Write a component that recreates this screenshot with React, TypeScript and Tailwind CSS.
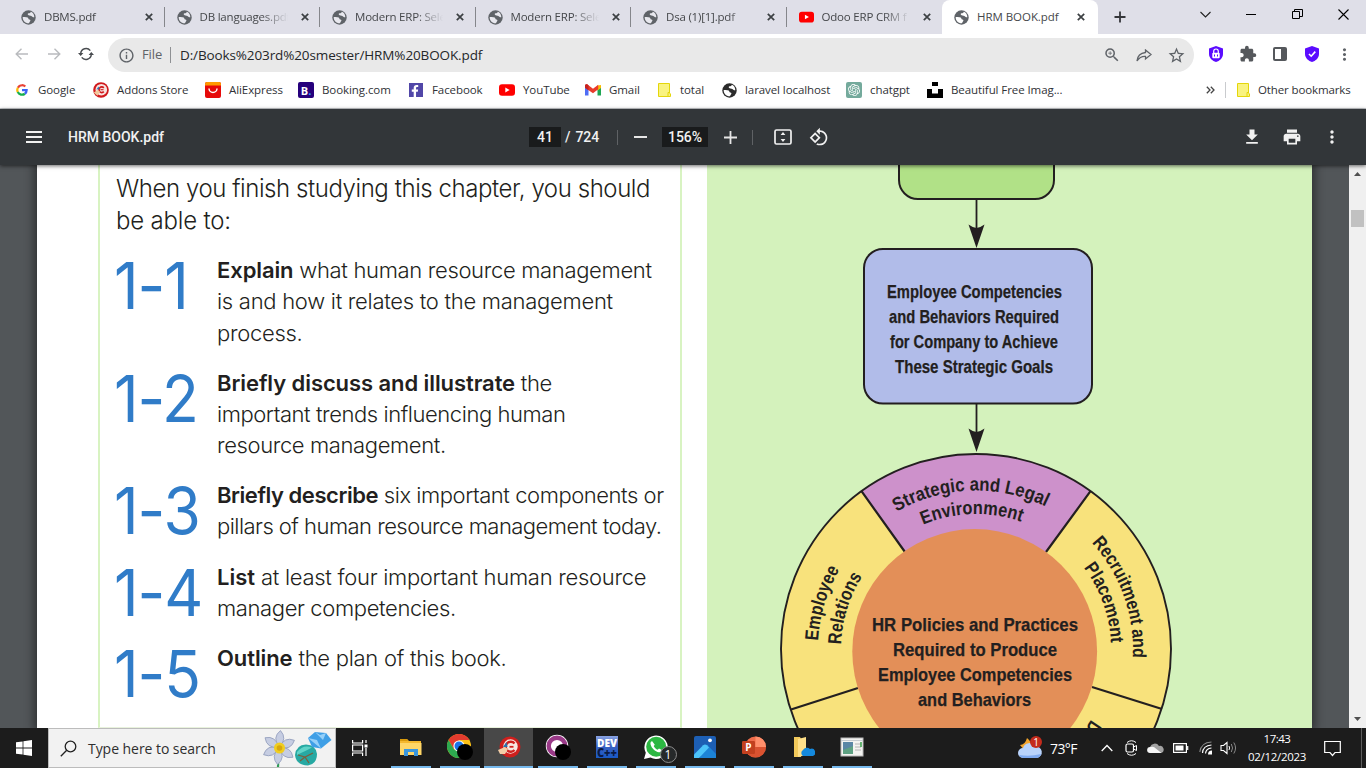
import type { ReactNode } from "react";
import {
  MdOutlineInfo, MdMoreVert, MdExtension, MdFileDownload, MdPrint, MdStarOutline, MdOutlineZoomIn,
} from "react-icons/md";
import { SiOpenai } from "react-icons/si";
import { FaFacebookF } from "react-icons/fa";

const INK = "#231f20";

function Globe({ color = "#5f6368", land = "#e8e8ee" }: { color?: string; land?: string }) {
  return (
    <svg width="15" height="15" viewBox="0 0 15 15" className="shrink-0">
      <circle cx="7.5" cy="7.5" r="7.2" fill={color} />
      <path d="M9.800 1.800C9.600 3 8.600 3.200 7.600 3.300C6.300 3.500 6.600 4.800 7.600 5.200C8.700 5.600 10.500 5.400 11 6.600C11.300 7.400 12.500 7.300 13.300 7.300C13.400 4.800 12 2.600 9.800 1.800Z" fill={land} />
      <path d="M1.700 7C3.500 7 5.800 6.900 6.900 7.800C7.600 8.500 7.200 9.300 8.300 9.600C9.600 9.900 9.700 10.800 8.900 11.600C8.400 12.200 8.300 12.800 7.900 13.300C4.400 13.500 1.500 10.600 1.700 7Z" fill={land} />
    </svg>
  );
}

function YouTube({ w = 16 }: { w?: number }) {
  return (
    <svg width={w} height="12" viewBox="0 0 16 12" className="shrink-0">
      <rect width="16" height="11.5" y=".3" rx="3" fill="#f00" />
      <path d="M6.3 3.6v4.8L10.6 6z" fill="#fff" />
    </svg>
  );
}

function Folder() {
  return (
    <svg width="14" height="16" viewBox="0 0 14 16">
      <path d="M1.5 1.5h11v9.5l1 1v2.5h-12z" fill="#f9f380" stroke="#e4d60a" />
      <path d="M11 14.5v-4h1.5" fill="none" stroke="#e4d60a" />
    </svg>
  );
}

function Close() {
  return (
    <svg width="8" height="8" viewBox="0 0 8 8" className="shrink-0">
      <path d="M.8.8l6.4 6.4M7.2.8L.8 7.2" stroke="#3c4043" strokeWidth="1.7" />
    </svg>
  );
}

function Addons() {
  return (
    <svg width="16" height="16" viewBox="0 0 16 16">
      <circle cx="8" cy="8" r="7.8" fill="#d0191c" />
      <circle cx="8.3" cy="7.7" r="5.8" fill="#f7e3df" />
      <path d="M10.800 5.800A2.800 2.800 0 1 0 10.800 9.700" fill="none" stroke="#d0191c" strokeWidth="1.700" />
      <path d="M7.5 7.7h3" stroke="#d0191c" strokeWidth="1.1" />
      <path d="M.8 10.5l4-2.5 2.2 1.5-2.6 4.2z" fill="#f2c79b" />
      <path d="M3.5 7.5l2-3 1 2.5z" fill="#2876b8" />
    </svg>
  );
}

const TABS: { title: string; icon: "globe" | "yt" }[] = [
  { title: "DBMS.pdf", icon: "globe" },
  { title: "DB languages.pdf", icon: "globe" },
  { title: "Modern ERP: Sele", icon: "globe" },
  { title: "Modern ERP: Sele", icon: "globe" },
  { title: "Dsa (1)[1].pdf", icon: "globe" },
  { title: "Odoo ERP CRM f", icon: "yt" },
];

function TabStrip() {
  return (
    <div className="flex h-[34px] bg-[#dfdfe8] pl-[9px] text-[11.500px] tracking-[-0.200px] text-[#45474a]">
      {TABS.map((t, i) => (
        <div key={i} className="flex h-[34px] w-[155.500px] shrink-0 items-center pl-3">
          {t.icon === "globe" ? <Globe /> : <YouTube w={15} />}
          <span className="ml-2 w-[90px] overflow-hidden whitespace-nowrap [mask-image:linear-gradient(to_right,black_68%,transparent_98%)]">{t.title}</span>
          <span className="ml-[11px]"><Close /></span>
          {i < 5 && <span className="ml-auto h-5 w-px bg-[#85868b]" />}
        </div>
      ))}
      <div className="flex w-[156px] shrink-0 items-center rounded-t-lg bg-white pl-[12px]">
        <Globe land="#fff" />
        <span className="ml-2 w-[84px] whitespace-nowrap tracking-[-0.050px]">HRM BOOK.pdf</span>
        <span className="ml-4"><Close /></span>
      </div>
      <svg width="12" height="12" viewBox="0 0 12 12" className="ml-[16px] mt-[11px] shrink-0"><path d="M6 .5v11M.5 6h11" stroke="#35363a" strokeWidth="1.8" /></svg>
      <div className="ml-auto flex h-7 items-center">
        <span className="flex w-[46px] justify-center"><svg width="11" height="7" viewBox="0 0 11 7"><path d="M.5 1l5 5 5-5" fill="none" stroke="#222" strokeWidth="1.1" /></svg></span>
        <span className="flex w-[46px] justify-center"><span className="h-px w-[10px] bg-black" /></span>
        <span className="flex w-[46px] justify-center"><svg width="11" height="11" viewBox="0 0 11 11"><path d="M.5 2.5h7v7h-7zM2.5 2.5v-2h8v7h-3" fill="none" stroke="#000" /></svg></span>
        <span className="flex w-[46px] justify-center"><svg width="11" height="11" viewBox="0 0 11 11"><path d="M.5.5l10 10M10.5.5l-10 10" stroke="#000" strokeWidth="1.1" /></svg></span>
      </div>
    </div>
  );
}

function Slot({ children }: { children: ReactNode }) {
  return <span className="flex h-8 w-8 shrink-0 items-center justify-center">{children}</span>;
}

function Shield({ lock }: { lock?: boolean }) {
  return (
    <svg width="16" height="16" viewBox="0 0 16 16">
      <path d="M8 0L15 2.5V8C15 12 11.5 15 8 16C4.500 15 1 12 1 8V2.500Z" fill="#5b0cff" />
      {lock ? (
        <>
          <path d="M5.700 7V5.300a2.300 2.300 0 0 1 4.600 0V7" fill="none" stroke="#fff" strokeWidth="1.200" />
          <rect x="4.300" y="6.800" width="7.400" height="5.400" rx="1" fill="#fff" />
          <path d="M6.500 8.500v2M9.500 8.500v2" stroke="#5b0cff" />
        </>
      ) : (
        <path d="M5 8l2.200 2.200L11.300 5.600" fill="none" stroke="#fff" strokeWidth="1.600" />
      )}
    </svg>
  );
}

function AddressBar() {
  return (
    <div className="flex h-[38px] items-center bg-white pl-[6px] pt-[2px] text-[#5f6368]">
      <Slot><svg width="14" height="12" viewBox="0 0 14 12"><path d="M6.500.7L1.200 6l5.300 5.300M1.200 6H13" fill="none" stroke="#b9bbbe" strokeWidth="1.400" /></svg></Slot>
      <Slot><svg width="14" height="12" viewBox="0 0 14 12"><path d="M7.500.7L12.800 6l-5.300 5.300M12.800 6H1" fill="none" stroke="#b9bbbe" strokeWidth="1.400" /></svg></Slot>
      <Slot>
        <svg width="16" height="14" viewBox="0 0 16 14">
          <path d="M2.700 6.500A5.400 5.400 0 0 1 12.300 3.600M13.300 7.500A5.400 5.400 0 0 1 3.700 10.400" fill="none" stroke="#4a4d51" strokeWidth="1.500" />
          <path d="M0 6h5.400L2.700 9zM10.600 8H16L13.300 5z" fill="#4a4d51" />
        </svg>
      </Slot>
      <div className="ml-[6px] mt-[2px] flex h-[34px] w-[1086px] items-center rounded-full bg-[#e9e9e9] pl-[10px] pr-[2px]">
        <MdOutlineInfo size={17} className="shrink-0 rotate-0" />
        <span className="ml-[7px] w-[22px] text-[13px] tracking-[-0.1px]">File</span>
        <span className="ml-[6px] h-4 w-px bg-[#8f9194]" />
        <span className="ml-[9px] whitespace-nowrap text-[13.5px] tracking-[-0.12px] text-[#25272a]">D:/Books%203rd%20smester/HRM%20BOOK.pdf</span>
        <span className="ml-auto flex">
          <Slot><MdOutlineZoomIn size={18} /></Slot>
          <Slot><svg width="16" height="13" viewBox="0 0 16 13"><path d="M9.500 1l5.500 4.500L9.500 10V7.500C5.500 7.200 3 9 1 12C1.500 7 4.500 4 9.500 3.500Z" fill="none" stroke="#5f6368" strokeWidth="1.300" /></svg></Slot>
          <Slot><MdStarOutline size={19} /></Slot>
        </span>
      </div>
      <div className="ml-[6px] flex">
        <Slot><Shield lock /></Slot>
        <Slot><MdExtension size={18} color="#55585c" /></Slot>
        <Slot><svg width="14" height="14" viewBox="0 0 14 14"><rect width="14" height="14" rx="2" fill="#55585c" /><rect x="2" y="2" width="6" height="10" fill="#fff" /></svg></Slot>
        <Slot><Shield /></Slot>
        <Slot><MdMoreVert size={19} /></Slot>
      </div>
    </div>
  );
}

const BOOKMARKS: { label: string; w: string; icon: ReactNode }[] = [
  { label: "Google", w: "w-[79px]", icon: (
    <svg width="12" height="12" viewBox="0 0 24 24"><path d="M12 2.500a9.500 9.500 0 0 1 6.600 2.600" fill="none" stroke="#ea4335" strokeWidth="4.500" /><path d="M3.800 7.500A9.500 9.500 0 0 1 12 2.500" fill="none" stroke="#ea4335" strokeWidth="4.500" /><path d="M3.500 16.200a9.500 9.500 0 0 1 .3-8.700" fill="none" stroke="#fbbc05" strokeWidth="4.500" /><path d="M3.500 16.200a9.500 9.500 0 0 0 14.200 3.300" fill="none" stroke="#15b04c" strokeWidth="4.500" /><path d="M12 12h9.300a9.500 9.500 0 0 1-3.600 7.500" fill="none" stroke="#3b62f6" strokeWidth="4.500" /></svg>) },
  { label: "Addons Store", w: "w-[112px]", icon: <Addons /> },
  { label: "AliExpress", w: "w-[93px]", icon: (
    <svg width="16" height="16" viewBox="0 0 16 16"><rect width="16" height="16" rx="2" fill="#e60a0a" /><path d="M0 3.500V2a2 2 0 0 1 2-2h12a2 2 0 0 1 2 2v1.500z" fill="#ff9a00" /><path d="M4 6.500a4 4 0 0 0 8 0" fill="none" stroke="#fff" strokeWidth="1.500" /></svg>) },
  { label: "Booking.com", w: "w-[110px]", icon: <span className="flex h-4 w-4 items-center justify-center rounded-[2px] bg-[#26007c] text-[11px] font-bold leading-none tracking-normal text-white">B<span className="text-[#2aa0ff]">.</span></span> },
  { label: "Facebook", w: "w-[91px]", icon: <span className="flex h-[14px] w-[14px] items-end justify-end bg-[#5147a8] pr-[2px]"><FaFacebookF size={12} color="#fff" /></span> },
  { label: "YouTube", w: "w-[86px]", icon: <YouTube /> },
  { label: "Gmail", w: "w-[71px]", icon: (
    <svg width="16" height="12" viewBox="0 0 16 12"><path d="M0 2v9.500h3.500V5z" fill="#4f6df5" /><path d="M16 2v9.500h-3.500V5z" fill="#1fa653" /><path d="M12.500 1.500L16 1v3l-3.500 2.500z" fill="#fbbc04" /><path d="M0 3.800V1.700C0 .2 1.700-.2 2.800.7L8 4.800 13.200.7v4.600L8 9.200z" fill="#ea3a2c" /><path d="M0 3.800V1.700C0 .2 1.700-.2 2.800.7l.7.6v5z" fill="#c5221f" /></svg>) },
  { label: "total", w: "w-[65px]", icon: <Folder /> },
  { label: "laravel localhost", w: "w-[125px]", icon: <Globe color="#2b2b2b" land="#fff" /> },
  { label: "chatgpt", w: "w-[81px]", icon: <span className="flex h-4 w-4 items-center justify-center rounded-[2px] bg-[#74aa9c]"><SiOpenai size={12} color="#fff" /></span> },
  { label: "Beautiful Free Imag...", w: "w-[150px]", icon: <svg width="16" height="16" viewBox="0 0 16 16"><path d="M5 0h6v4H5zM0 7h5v4.500h6V7h5v9H0z" /></svg> },
];

function BookmarksBar() {
  return (
    <div className="flex h-[37px] items-center border-b border-[#c9cbce] bg-white pl-[14px] text-[11.500px] tracking-[-0.080px] text-[#303236]">
      {BOOKMARKS.map((b) => (
        <div key={b.label} className={`flex shrink-0 items-center ${b.w}`}>
          <span className="mr-2 flex h-4 w-4 items-center justify-center">{b.icon}</span>
          <span className="whitespace-nowrap">{b.label}</span>
        </div>
      ))}
      <span className="ml-auto"><svg width="9" height="8" viewBox="0 0 9 8"><path d="M.8.8L4 4 .8 7.200M4.800.8L8 4 4.800 7.200" fill="none" stroke="#444" strokeWidth="1.300" /></svg></span>
      <span className="ml-[10px] h-4 w-px bg-[#c9cbce]" />
      <span className="ml-[10px] mr-2"><Folder /></span>
      <span className="mr-[12px] w-[96px] whitespace-nowrap tracking-[-0.120px]">Other bookmarks</span>
    </div>
  );
}

function PdfToolbar() {
  return (
    <div className="relative z-10 flex h-14 items-center bg-[#323639] pl-[24px] font-['Roboto',sans-serif] text-[14px] font-medium text-[#f1f1f1] shadow-[0_1px_4px_rgba(0,0,0,0.6)]">
      <svg width="16" height="12" viewBox="0 0 16 12" className="ml-[2px]"><path d="M0 1h16M0 6h16M0 11h16" stroke="#f1f1f1" strokeWidth="2" /></svg>
      <span className="ml-[26px] w-[461px] whitespace-nowrap">HRM BOOK.pdf</span>
      <span className="flex h-5 w-8 items-center justify-center bg-[#191b1c]">41</span>
      <span className="ml-[4px] w-[52px] whitespace-nowrap tracking-[-0.080px]">/<span className="ml-[5px]">724</span></span>
      <span className="h-[15px] w-px bg-[#5f6265]" />
      <span className="ml-[16px] h-[2px] w-[13px] bg-[#e6e6e6]" />
      <span className="ml-[15px] flex h-5 w-[46px] items-center justify-center bg-[#191b1c] tracking-[-0.1px]">156%</span>
      <svg width="13" height="13" viewBox="0 0 13 13" className="ml-[15.500px]"><path d="M6.500 0v13M0 6.500h13" stroke="#e6e6e6" strokeWidth="1.800" /></svg>
      <span className="ml-[15.500px] h-[15px] w-px bg-[#5f6265]" />
      <svg width="18" height="16" viewBox="0 0 18 16" className="ml-[21px]"><rect x="1" y="1" width="16" height="14" rx="1.500" fill="none" stroke="#f1f1f1" strokeWidth="1.700" /><path d="M9 3l2.400 3H6.600zM9 13l2.400-3H6.600z" fill="#f1f1f1" /></svg>
      <svg width="20" height="20" viewBox="0 0 24 24" className="ml-[17px]"><path fill="#f1f1f1" d="M7.340 6.410L.86 12.900l6.490 6.480 6.490-6.480-6.500-6.490zM3.690 12.900l3.660-3.660L11 12.900l-3.660 3.660-3.650-3.660zm15.670-6.260C17.610 4.880 15.300 4 13 4V.76L8.760 5 13 9.240V6c1.790 0 3.580.68 4.950 2.050 2.730 2.730 2.730 7.170 0 9.900C16.580 19.320 14.790 20 13 20c-.97 0-1.940-.21-2.840-.61l-1.490 1.490C10.020 21.620 11.510 22 13 22c2.300 0 4.610-.88 6.360-2.640 3.520-3.510 3.520-9.210 0-12.720z" /></svg>
      <div className="ml-auto mr-[14px] flex">
        <span className="flex w-10 justify-center"><MdFileDownload size={20} /></span>
        <span className="flex w-10 justify-center"><MdPrint size={20} /></span>
        <span className="flex w-10 justify-center"><MdMoreVert size={20} /></span>
      </div>
    </div>
  );
}

function Objective({ n, h, children }: { n: string; h: string; children: ReactNode }) {
  return (
    <div className={`flex ${h}`}>
      <div className="w-[101px] shrink-0">
        <span className="-ml-[2px] inline-block origin-left scale-x-[0.93] whitespace-nowrap text-[65px] font-normal leading-[61px] tracking-[-1.200px] text-[#307cc8] [font-feature-settings:'calt'_0]">{n}</span>
      </div>
      <div className="whitespace-nowrap text-[22px] leading-[31.300px]">{children}</div>
    </div>
  );
}

function LeftPage() {
  return (
    <div className="w-[670px] shrink-0 bg-white pl-[61px]">
      <div className="h-[563px] w-[584px] border-x-2 border-b border-x-[#d8f3c2] border-b-[#e8f2dc] pl-[16px] pt-[8px] font-['Inter',sans-serif] font-light text-[#231f20]">
        <div className="mb-[18px] whitespace-nowrap text-[24px] leading-8">
          <p className="tracking-[-0.430px]">When you finish studying this chapter, you should</p>
          <p className="tracking-[-0.200px]">be able to:</p>
        </div>
        <Objective n="1-1" h="h-[112.500px]">
          <p className="tracking-[-0.330px]"><b className="font-semibold tracking-[-0.100px]">Explain</b> what human resource management</p>
          <p className="tracking-[-0.280px]">is and how it relates to the management</p>
          <p className="tracking-[-0.300px]">process.</p>
        </Objective>
        <Objective n="1-2" h="h-[112.500px]">
          <p className="tracking-[-0.400px]"><b className="font-semibold tracking-[-0.080px]">Briefly discuss and illustrate</b> the</p>
          <p className="tracking-[-0.440px]">important trends influencing human</p>
          <p className="tracking-[-0.380px]">resource management.</p>
        </Objective>
        <Objective n="1-3" h="h-[82px]">
          <p className="tracking-[-0.450px]"><b className="font-semibold">Briefly describe</b> six important components or</p>
          <p className="tracking-[-0.540px]">pillars of human resource management today.</p>
        </Objective>
        <Objective n="1-4" h="h-[81px]">
          <p className="tracking-[-0.290px]"><b className="font-semibold tracking-normal">List</b> at least four important human resource</p>
          <p className="tracking-[-0.380px]">manager competencies.</p>
        </Objective>
        <Objective n="1-5" h="h-[60px]">
          <p className="tracking-[-0.280px]"><b className="font-semibold tracking-[-0.100px]">Outline</b> the plan of this book.</p>
        </Objective>
      </div>
    </div>
  );
}

const BOX_LINES: [string, number, number, number][] = [
  ["Employee Competencies", 887, 175, 297.500],
  ["and Behaviors Required", 889, 170, 322.500],
  ["for Company to Achieve", 890, 168, 347.500],
  ["These Strategic Goals", 895, 158, 372.500],
  ["HR Policies and Practices", 872, 206, 630.500],
  ["Required to Produce", 893, 164, 655.500],
  ["Employee Competencies", 878, 194, 680.500],
  ["and Behaviors", 918, 113, 705.500],
];

const ARC_TEXT: { id: string; text: string; r: number; from: number; len: number }[] = [
  { id: "strategic", text: "Strategic and Legal", r: 158.500, from: -30, len: 155 },
  { id: "environment", text: "Environment", r: 135, from: -23, len: 100 },
  { id: "employee", text: "Employee", r: 158, from: -87, len: 75 },
  { id: "relations", text: "Relations", r: 135, from: -88, len: 72 },
  { id: "recruitment", text: "Recruitment and", r: 157, from: 47.500, len: 125 },
  { id: "placement", text: "Placement", r: 135, from: 53, len: 81 },
  { id: "development", text: "Development", r: 135, from: 121.500, len: 95 },
];

function arcPath(r: number, from: number) {
  const at = (deg: number) => {
    const a = (deg * Math.PI) / 180;
    return `${(976 + r * Math.sin(a)).toFixed(2)} ${(649 - r * Math.cos(a)).toFixed(2)}`;
  };
  return `M${at(from)}A${r} ${r} 0 0 1 ${at(from + 75)}`;
}

function Diagram() {
  return (
    <svg width="605" height="563" viewBox="707 165 605 563" className="shrink-0 bg-[#d4f2bc] font-['Liberation_Sans_Narrow','Liberation_Sans',sans-serif]">
      <rect x="899" y="120" width="155" height="79" rx="19" fill="#b1e187" stroke={INK} strokeWidth="2" />
      <rect x="864" y="249" width="228" height="154.500" rx="19" fill="#b1bce9" stroke={INK} strokeWidth="2" />
      {[199, 403].map((y) => (
        <g key={y}>
          <path d={`M976.500 ${y}v32`} stroke={INK} strokeWidth="1.800" />
          <path d={`M976.500 ${y + 49}l-8-23.500q4 3 8 3.500q4-.5 8-3.500z`} fill={INK} />
        </g>
      ))}
      <circle cx="976" cy="649" r="195" fill="#f8e27c" />
      <path d="M861.500 491.200A195 195 0 0 1 1090.500 491.200L1046 552L905 552Z" fill="#cd91cb" />
      <path d="M861.500 491.200L905 552M1090.500 491.200L1046 552M791 709.500L858 688M1162 709L1092 687" stroke={INK} strokeWidth="2.200" />
      <circle cx="976" cy="649" r="195" fill="none" stroke={INK} strokeWidth="1.900" />
      <circle cx="974.700" cy="651.500" r="122.400" fill="#e38f58" />
      <g fill={INK} fontSize="19" fontWeight="700">
        {BOX_LINES.map(([t, x, w, y]) => (
          <text key={y} x={x} y={y} textLength={w} lengthAdjust="spacingAndGlyphs" stroke={INK} strokeWidth=".25">{t}</text>
        ))}
        {ARC_TEXT.map((a) => (
          <g key={a.id}>
            <path id={a.id} d={arcPath(a.r, a.from)} fill="none" />
            <text textLength={a.len} lengthAdjust="spacingAndGlyphs">
              <textPath href={`#${a.id}`} textLength={a.len} lengthAdjust="spacingAndGlyphs">{a.text}</textPath>
            </text>
          </g>
        ))}
      </g>
    </svg>
  );
}

function Viewer() {
  return (
    <div className="flex h-[563px] overflow-hidden bg-[#525659]">
      <div className="ml-[37px] flex w-[1275px] shrink-0 shadow-[0_0_9px_3px_rgba(0,0,0,0.45)]">
        <LeftPage />
        <Diagram />
      </div>
      <div className="ml-auto flex w-[17px] flex-col items-center bg-[#f0f0f0]">
        <svg width="7" height="4" viewBox="0 0 7 4" className="mt-[7px]"><path d="M3.500 0L7 4H0z" fill="#505050" /></svg>
        <span className="mt-[34px] h-[17px] w-[13px] bg-[#c1c1c1]" />
        <svg width="7" height="4" viewBox="0 0 7 4" className="mb-[7px] mt-auto"><path d="M3.500 4L7 0H0z" fill="#505050" /></svg>
      </div>
    </div>
  );
}

function BlackDot() {
  return <circle cx="18" cy="18" r="8" fill="#000" />;
}

const APPS: ReactNode[] = [
  <svg width="24" height="24" viewBox="0 0 24 24"><path d="M1 4h7l2 2h12v14H1z" fill="#f5b82e" /><path d="M1 8h21.500v12H1z" fill="#ffd667" /><path d="M1 4h7l1 2H1z" fill="#d99a0b" /><path d="M5 21v-7h14v7h-4v-4H9v4z" fill="#3a96dd" /></svg>,
  <svg width="26" height="26" viewBox="0 0 26 26"><circle cx="12" cy="12" r="12" fill="#fbc116" /><path d="M1.600 6A12 12 0 0 1 22.400 6H12L6.800 15z" fill="#e33b2e" /><path d="M1.600 6A12 12 0 0 0 12 24L17.200 15 12 18 6.800 15z" fill="#2da94f" /><circle cx="12" cy="12" r="5.600" fill="#fff" /><circle cx="12" cy="12" r="4.500" fill="#1a73e8" /><BlackDot /></svg>,
  <svg width="24" height="24" viewBox="0 0 24 24"><circle cx="13" cy="12" r="10.500" fill="#cf1f1d" /><circle cx="13.500" cy="11.500" r="7.200" fill="#f8e8e2" /><path d="M17.500 8.500A5 5 0 1 0 17.500 15" fill="none" stroke="#d0221f" strokeWidth="2.400" /><path d="M12.500 11.800h4" stroke="#d0221f" strokeWidth="1.800" /><path d="M1 15l7-3 3 2-3 5-5 0z" fill="#f3cda6" /><path d="M6 12l3.500-5 1 5z" fill="#2672ae" /></svg>,
  <svg width="26" height="26" viewBox="0 0 26 26"><circle cx="12" cy="12" r="11.200" fill="#fff" /><circle cx="12" cy="12" r="8.300" fill="none" stroke="#9a3a88" strokeWidth="4.400" /><circle cx="12" cy="12" r="3" fill="#fff" /><BlackDot /></svg>,
  <svg width="22" height="22" viewBox="0 0 22 22"><defs><linearGradient id="dev" x2="0" y2="1"><stop stopColor="#c9d8ff" /><stop offset=".45" stopColor="#4468c7" /><stop offset="1" stopColor="#0a5bd0" /></linearGradient></defs><rect width="22" height="22" fill="#2d56b8" /><rect width="22" height="22" fill="url(#dev)" opacity=".6" /><text x="1" y="10.500" fontSize="11" fontWeight="800" fill="#fff" textLength="20" lengthAdjust="spacingAndGlyphs">DEV</text><text x="1" y="21" fontSize="12" fontWeight="800" fill="#0a1a44" textLength="20" lengthAdjust="spacingAndGlyphs">C++</text></svg>,
  <span className="relative flex h-6 w-6 items-center justify-center"><svg width="24" height="24" viewBox="0 0 24 24"><path d="M0 24l1.800-6.200A11.700 11.700 0 1 1 6.500 22.500z" fill="#fff" /><circle cx="12.200" cy="11.800" r="10" fill="#2cb742" /><path d="M8.200 6.200c-1.500 0-2 1.800-1.600 3.200C7.500 13 11 16.500 15 17.200c1.500.2 3-.8 2.800-2.200l-2.800-1.500-1.300 1.300c-1.800-.8-3.200-2.200-4-3.900l1.100-1.200z" fill="#fff" /></svg><span className="absolute left-[16px] top-[11px] flex h-[17px] w-[17px] items-center justify-center rounded-full border border-[#8b8b8b] bg-[#26292a] text-[12px] leading-none text-white">1</span></span>,
  <svg width="22" height="22" viewBox="0 0 22 22"><rect width="22" height="22" rx="2" fill="#1d5fb4" /><path d="M8.500 10.500L13 8.500L22 18v4H6z" fill="#1c83d6" /><path d="M0 18.500L9.200 9.300q1.800-1.500 3.600 0L15 11.500 5 22H0z" fill="#4cc4fa" /><circle cx="16" cy="4.300" r="1.900" fill="#fff" /></svg>,
  <svg width="26" height="24" viewBox="0 0 26 24"><circle cx="14.500" cy="12" r="10.500" fill="#ee6c4a" /><path d="M14.500 1.500A10.500 10.500 0 0 1 25 12H14.500z" fill="#ff8f6b" /><path d="M4 12h21a10.500 10.500 0 0 1-21 0z" fill="#d24725" opacity=".7" /><rect x="1" y="6" width="13" height="13" rx="1.200" fill="#c2401f" /><text x="4.300" y="16" fontSize="10" fontWeight="700" fill="#fff">P</text></svg>,
  <svg width="24" height="24" viewBox="0 0 24 24"><path d="M3 2h6l1 2v18H3z" fill="#f2c95b" /><path d="M7 4l8-2v18l-8 2z" fill="#ffe08a" /><path d="M12 21a3.500 3.500 0 0 1 0-6 4.500 4.500 0 0 1 7-1 3.600 3.600 0 0 1 3 7z" fill="#1489dd" /></svg>,
  <svg width="24" height="22" viewBox="0 0 24 22"><rect x="1" y="2" width="22" height="18" fill="#f3f3f1" stroke="#b9b9b9" /><path d="M1 4.500h22" stroke="#c7ccd1" /><rect x="3" y="6" width="10" height="12" fill="#5ea183" /><path d="M3 6h10v4L3 14z" fill="#5b87a6" /><path d="M15 8h6M15 11h6M15 14h6" stroke="#b4b4b4" /><path d="M21 6v5" stroke="#39a04a" strokeWidth="1.500" /></svg>,
];

function Tray() {
  return (
    <div className="ml-auto flex h-10 items-center text-white">
      <svg width="26" height="24" viewBox="0 0 26 24"><path d="M3 9q5 0 7-7q5 4 4 9l-6 4z" fill="#f4a52c" /><path d="M6 22a5 5 0 0 1 0-10 6.500 6.500 0 0 1 12-1.500A5.500 5.500 0 0 1 20 22z" fill="#b9d3fb" /><path d="M2 19q11 2 22-1a5 5 0 0 1-4 4H6a5 5 0 0 1-4-3z" fill="#7faaf0" /><circle cx="19" cy="6" r="6" fill="#c42b1c" /><text x="16.200" y="9.500" fontSize="10" fill="#fff">1</text></svg>
      <span className="ml-[7px] w-[51px] whitespace-nowrap text-[14px] tracking-[-0.600px]">73°F</span>
      <svg width="12" height="8" viewBox="0 0 12 8"><path d="M.7 7L6 1.500 11.300 7" fill="none" stroke="#fff" strokeWidth="1.300" /></svg>
      <svg width="13" height="18" viewBox="0 0 13 18" className="ml-[12px]"><path d="M2 3.500Q6.500 0 11 3.500M2 14.500q4.500 3.500 9 0" fill="none" stroke="#fff" /><rect x="1" y="5" width="7.500" height="8" rx="1.500" fill="none" stroke="#fff" strokeWidth="1.200" /><path d="M8.500 8l3-1.500v5l-3-1.500" fill="none" stroke="#fff" /></svg>
      <svg width="17" height="12" viewBox="0 0 17 12" className="ml-[9px]"><path d="M3 11a3 3 0 0 1 0-6 5 5 0 0 1 9-1 3.600 3.600 0 0 1 2 7z" fill="#a2a2a2" /><path d="M3 11a3 3 0 0 1 .8-6q3-1 5 1.500l5.700 4.500z" fill="#f5f5f5" /></svg>
      <svg width="16" height="10" viewBox="0 0 16 10" className="ml-[9px]"><rect x=".6" y=".6" width="12.800" height="8.800" fill="none" stroke="#fff" strokeWidth="1.200" /><rect x="2.500" y="2.500" width="8" height="5" fill="#fff" /><path d="M14.700 3v4" stroke="#fff" strokeWidth="1.200" /></svg>
      <svg width="14" height="14" viewBox="0 0 14 14" className="ml-[10px]"><path d="M.8 11Q2 1.500 12.500 1" fill="none" stroke="#8a8a8a" strokeWidth="1.100" /><path d="M3.500 12Q4 4.500 12.500 4M6.500 12.500Q7 7.500 12.500 7" fill="none" stroke="#fff" strokeWidth="1.200" /><path d="M9 13.500q0-4 4-4v4z" fill="#fff" /></svg>
      <svg width="17" height="14" viewBox="0 0 17 14" className="ml-[7px]"><path d="M1 4.500h2.500L7 1.500v11L3.500 9.500H1z" fill="none" stroke="#fff" strokeWidth="1.100" /><path d="M9 5q1.200 2 0 4" fill="none" stroke="#fff" /><path d="M11.300 3q2.500 4 0 8M13.800 1.500q3.500 5.500 0 11" fill="none" stroke="#8a8a8a" /></svg>
      <div className="ml-[9px] flex w-[62px] flex-col items-center whitespace-nowrap text-[11.500px] leading-[18px]">
        <span className="tracking-[-0.500px]">17:43</span>
        <span className="tracking-[-0.320px]">02/12/2023</span>
      </div>
      <svg width="17" height="17" viewBox="0 0 17 17" className="ml-[16px]"><path d="M.7 1.500h15.600v11H11l-2.500 3-2.500-3H.7z" fill="none" stroke="#fff" strokeWidth="1.200" /></svg>
      <span className="ml-[20px] mr-1 h-10 w-px bg-[#5d5d5d]" />
    </div>
  );
}

function Taskbar() {
  return (
    <div className="flex h-10 bg-[#1c1c1c]">
      <span className="flex w-12 items-center justify-center">
        <svg width="16" height="16" viewBox="0 0 16 16"><path d="M0 2.300L6.600 1.400v6.200H0zM7.400 1.300L16 0v7.600H7.400zM0 8.400h6.600v6.200L0 13.700zM7.400 8.400H16V16l-8.600-1.300z" fill="#fff" /></svg>
      </span>
      <div className="flex w-[288px] items-center border border-[#bcbcbc] bg-[#f2f2f2] pl-[11px] text-[14px] tracking-[-0.050px] text-[#2f2f2f]">
        <svg width="17" height="17" viewBox="0 0 17 17"><circle cx="10.500" cy="6.500" r="5.300" fill="none" stroke="#222" strokeWidth="1.300" /><path d="M6.700 10.300L.8 16.200" stroke="#222" strokeWidth="1.300" /></svg>
        <span className="ml-[11px] w-[175px] whitespace-nowrap">Type here to search</span>
        <svg width="70" height="38" viewBox="0 0 70 38" className="shrink-0">
          <path d="M14.500 18Q15.500 30 15 38" fill="none" stroke="#2f9e57" strokeWidth="2.200" />
          {[0, 60, 120, 180, 240, 300].map((d) => (
            <path key={d} d="M16 18Q8 9 16 1.500Q24 9 16 18Z" transform={`rotate(${d + 5} 16 18.500)`} fill="#c6cde2" stroke="#929dbc" strokeWidth=".8" />
          ))}
          <circle cx="16.500" cy="19" r="5.500" fill="#f0cd20" /><circle cx="16.500" cy="19" r="2.800" fill="#d8a70c" />
          <path d="M32 26Q33 16 43 15.500Q53 16 54 25Q54 35 45 36.500Q33 36 32 26Z" fill="#27a9a3" />
          <path d="M34 23Q40 15 49 18.500Q44 21 34 26Z" fill="#5fd3c8" />
          <path d="M35 26l7 2 8-4M42 28l4 6M42 28l-5 4" fill="none" stroke="#7b5f3e" strokeWidth="1.300" />
          <path d="M45 9L52 3L63 4L68.500 11L58 19.500L49 18Z" fill="#3f9fe6" /><path d="M45 9L54 11L58 19.500M54 11L68.500 11M52 3l5 3 6-2-3 7z" fill="#a5d8fb" opacity=".85" />
        </svg>
      </div>
      <span className="flex w-[50px] items-center justify-center pr-[2px]">
        <svg width="17" height="16" viewBox="0 0 17 16"><path d="M.6 0v3h10V0M.6 16v-3h10v3M.6 5h10v6H.6zM14 0v3M14 8v8" fill="none" stroke="#fff" strokeWidth="1.200" /><rect x="12.500" y="4.500" width="3" height="3" fill="#fff" /></svg>
      </span>
      <div className="flex">
        {APPS.map((icon, i) => (
          <div key={i} className={`flex w-[49px] flex-col items-center ${i === 2 ? "bg-[#484848]" : ""}`}>
            <span className="flex h-[38px] items-center">{icon}</span>
            <span className={`h-[2px] bg-[#76b9ed] ${i === 2 ? "w-full" : "w-10"}`} />
          </div>
        ))}
      </div>
      <Tray />
    </div>
  );
}

export default function App() {
  return (
    <div className="h-[768px] w-[1366px] overflow-hidden bg-white font-['Open_Sans',sans-serif]">
      <TabStrip />
      <AddressBar />
      <BookmarksBar />
      <PdfToolbar />
      <Viewer />
      <Taskbar />
    </div>
  );
}
